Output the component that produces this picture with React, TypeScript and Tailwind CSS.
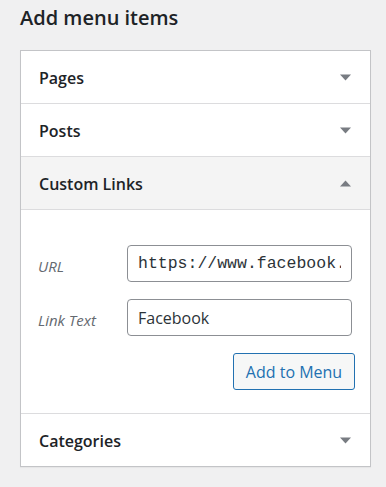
import { useState } from "react";

const Arrow = ({ up = false }: { up?: boolean }) => (
  <svg width="11" height="7" viewBox="0 0 11 7" className="shrink-0">
    {up ? <path d="M0 6.5 L5.5 0.5 L11 6.5 Z" fill="#787c82" /> : <path d="M0 0.5 L11 0.5 L5.5 6.5 Z" fill="#787c82" />}
  </svg>
);

const Header = ({ title, open = false }: { title: string; open?: boolean }) => (
  <div
    className={`h-[53px] flex items-center justify-between pl-[18px] pr-[19px] border-b border-[#dcdcde] ${open ? "bg-[#f4f4f4]" : "bg-white"}`}
  >
    <span className="text-[16px] font-semibold text-[#1d2327] pt-[1px]">{title}</span>
    <Arrow up={open} />
  </div>
);

const App = () => {
  const [url, setUrl] = useState("https://www.facebook.com/");
  const [text, setText] = useState("Facebook");

  return (
    <div className="min-h-[487px] bg-[#f0f0f1] font-['Open_Sans',sans-serif] text-[#1d2327]">
      <h2 className="pl-[20px] pt-[4px] text-[20px] leading-[28px] font-semibold">Add menu items</h2>
      <div className="mx-[20px] mt-[18px] w-[351px] bg-white border border-[#c3c4c7] shadow-[0_1px_1px_rgba(0,0,0,0.04)]">
        <Header title="Pages" />
        <Header title="Posts" />
        <Header title="Custom Links" open />
        <div className="h-[204px] border-b border-[#dcdcde] pl-[17px] pr-[17px] pt-[35px]">
          <div className="flex items-center">
            <label className="w-[89px] pt-[6px] text-[15px] italic text-[#646970]">URL</label>
            <input
              value={url}
              onChange={(e) => setUrl(e.target.value)}
              className="w-[225px] h-[37px] px-[10px] rounded-[4px] border border-[#8c8f94] font-['Liberation_Mono',monospace] text-[16.5px] text-[#2c3338] outline-none"
            />
          </div>
          <div className="flex items-center mt-[17px]">
            <label className="w-[89px] pt-[6px] text-[15px] italic text-[#646970]">Link Text</label>
            <input
              value={text}
              onChange={(e) => setText(e.target.value)}
              className="w-[225px] h-[37px] px-[10px] rounded-[4px] border border-[#8c8f94] text-[16px] text-[#2c3338] outline-none"
            />
          </div>
          <div className="flex justify-end mt-[17px]">
            <button className="h-[37px] w-[122px] -mr-[2px] rounded-[3px] border border-[#2271b1] bg-[#f6f7f7] text-[16px] text-[#2271b1]">
              Add to Menu
            </button>
          </div>
        </div>
        <div className="h-[52px] flex items-center justify-between pl-[18px] pr-[19px]">
          <span className="text-[16px] font-semibold pt-[1px]">Categories</span>
          <Arrow />
        </div>
      </div>
    </div>
  );
};

export default App;
